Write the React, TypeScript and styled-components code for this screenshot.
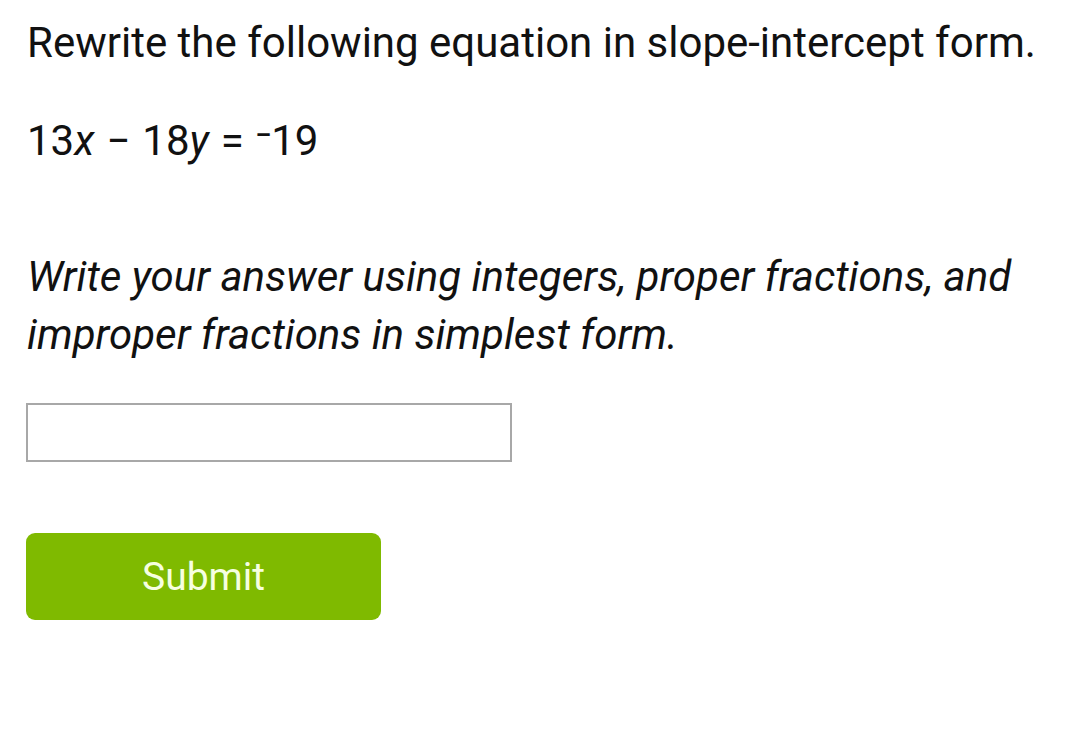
import React from "react";
import styled, { createGlobalStyle } from "styled-components";

const Global = createGlobalStyle`
  html, body { margin: 0; padding: 0; background: #ffffff; }
  body { font-family: Roboto, "Noto Sans", sans-serif; color: #111111; }
`;

const Page = styled.main`
  display: flex;
  flex-direction: column;
  align-items: flex-start;
  padding: 14px 27px 0 27px;
`;

const Prompt = styled.p`
  margin: 0;
  font-size: 42px;
  line-height: 58px;
  white-space: nowrap;
`;

const Equation = styled.p`
  margin: 40px 0 0 0;
  font-size: 42px;
  line-height: 58px;
  word-spacing: 1.5px;
`;

const Var = styled.i`
  font-style: italic;
`;

const Instructions = styled.p`
  margin: 78px 0 0 0;
  font-size: 42px;
  line-height: 58px;
  font-style: italic;
  white-space: nowrap;
`;

const AnswerInput = styled.input`
  margin: 39px 0 0 -1px;
  box-sizing: border-box;
  width: 486px;
  height: 59px;
  border: 2px solid #a8a8a8;
  background: #ffffff;
  outline: none;
  font-size: 32px;
  font-family: Roboto, sans-serif;
`;

const SubmitButton = styled.button`
  margin: 71px 0 0 -1px;
  width: 355px;
  height: 87px;
  border: none;
  border-radius: 9px;
  background: #7fba00;
  color: #f6ffe0;
  font-family: Roboto, sans-serif;
  font-size: 39px;
  cursor: pointer;
`;

export default function App() {
  return (
    <>
      <Global />
      <Page>
        <Prompt>Rewrite the following equation in slope-intercept form.</Prompt>
        <Equation>
          13<Var>x</Var> − 18<Var>y</Var> = ⁻19
        </Equation>
        <Instructions>
          Write your answer using integers, proper fractions, and
          <br />
          improper fractions in simplest form.
        </Instructions>
        <AnswerInput type="text" aria-label="answer" />
        <SubmitButton type="button">Submit</SubmitButton>
      </Page>
    </>
  );
}
